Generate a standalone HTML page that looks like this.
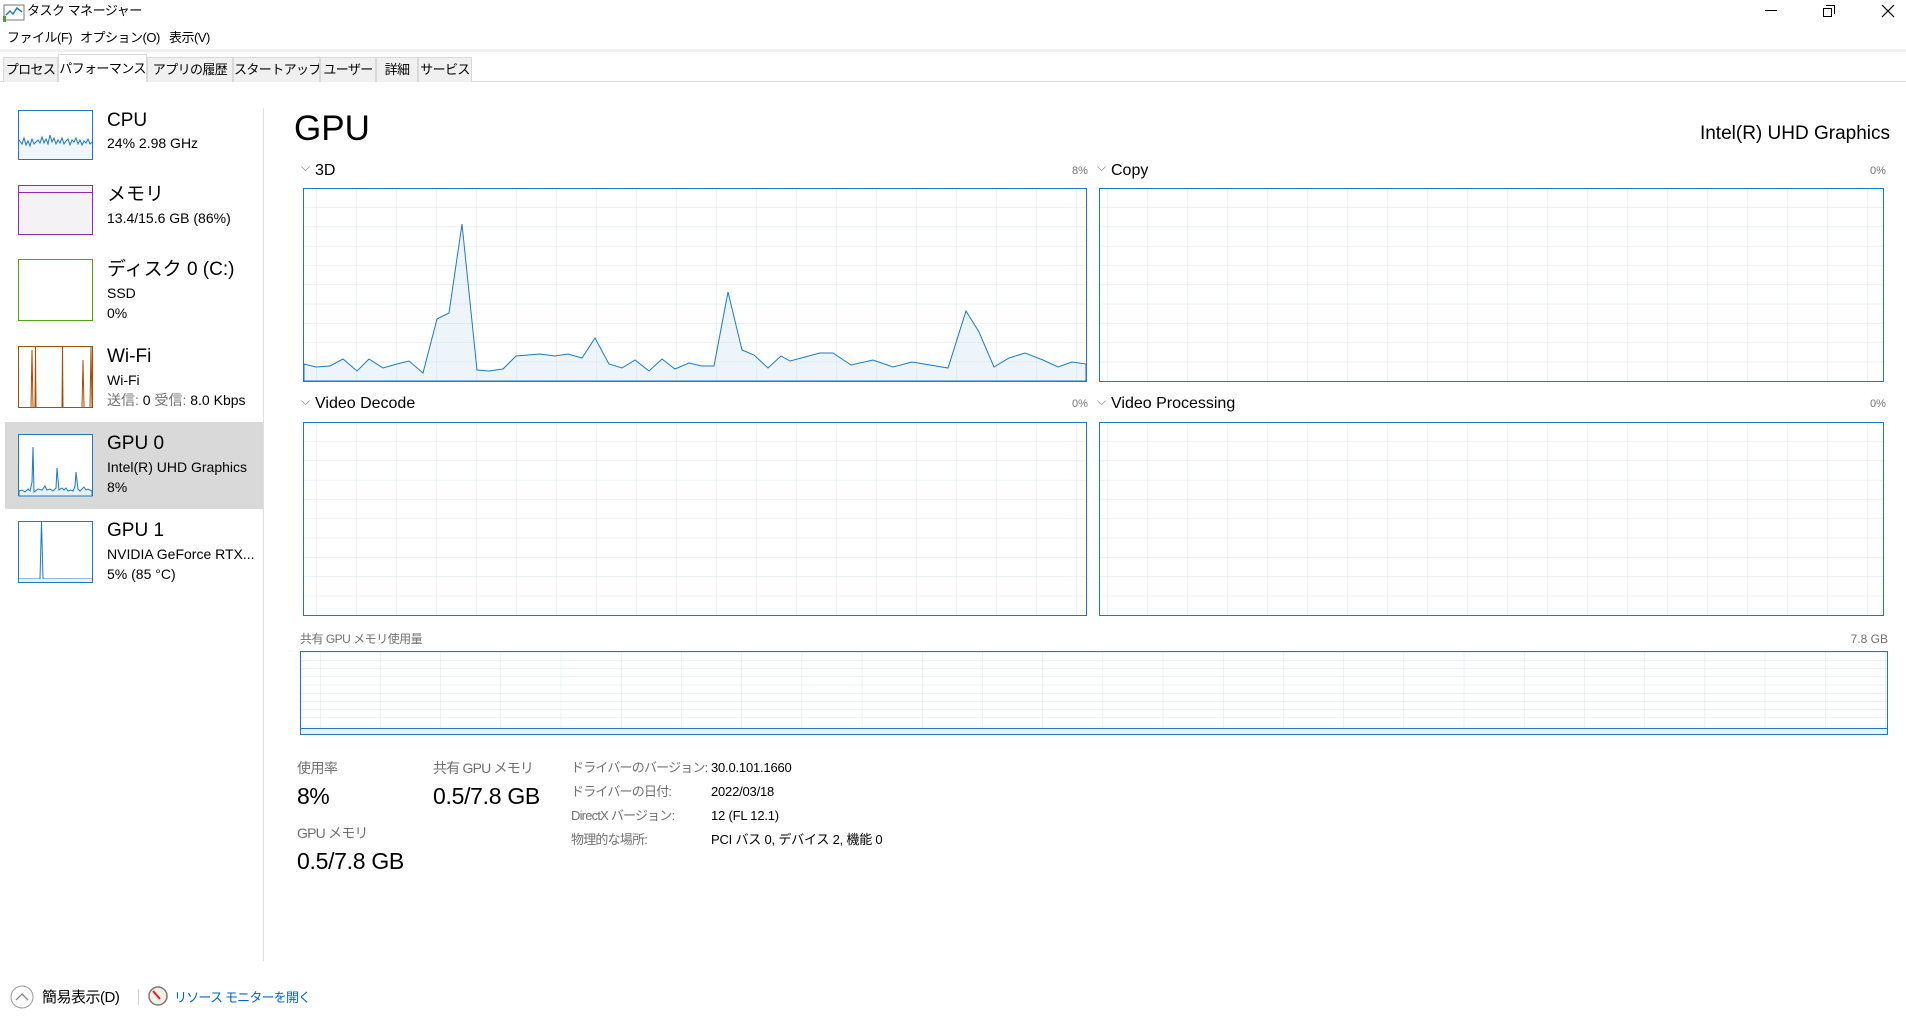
<!DOCTYPE html>
<html><head><meta charset="utf-8">
<style>
*{margin:0;padding:0;box-sizing:border-box}
body{width:1906px;height:1019px;background:#fff;position:relative;overflow:hidden;font-family:"Liberation Sans","Noto Sans CJK JP",sans-serif;color:#000}
.t{position:absolute;white-space:nowrap;line-height:1}
.g{color:#707070}
.tab{position:absolute;top:57px;height:25px;background:#f0f0f0;border:1px solid #d9d9d9;border-bottom:none;font-size:13px;letter-spacing:-0.6px;line-height:23px;text-align:center;white-space:nowrap;overflow:hidden}
.m{font-size:13px;letter-spacing:-0.5px}
.d{font-size:13px;letter-spacing:-0.8px}
.v{font-size:13px;letter-spacing:-0.2px}
svg{position:absolute;left:0;top:0}
</style></head><body>
<!-- title bar -->
<svg width="24" height="20" style="left:3px;top:3px"><rect x="1" y="2" width="20" height="15" fill="#fff" stroke="#777"/><polyline points="3,12 7,8 10,11 14,5 19,9" fill="none" stroke="#2a7ab8" stroke-width="1.5"/><rect x="0" y="13" width="3" height="6" fill="#5a9a3a"/></svg>
<div class="t m" style="left:27px;top:4px">タスク マネージャー</div>
<div style="position:absolute;left:1765px;top:10px;width:12px;height:1px;background:#000"></div>
<div style="position:absolute;left:1823px;top:8px;width:9px;height:9px;border:1px solid #000"></div>
<div style="position:absolute;left:1826px;top:5px;width:9px;height:9px;border-top:1px solid #000;border-right:1px solid #000"></div>
<svg width="1906" height="20" style="top:0"><path d="M1882 5 L1894 17 M1894 5 L1882 17" stroke="#000" stroke-width="1.2"/></svg>
<!-- menu -->
<div class="t m" style="left:7px;top:31px">ファイル(F)</div>
<div class="t m" style="left:80px;top:31px">オプション(O)</div>
<div class="t m" style="left:169px;top:31px">表示(V)</div>
<div style="position:absolute;left:0;top:49px;width:1906px;height:3px;background:#f0f0f0"></div>
<!-- tabs -->
<div style="position:absolute;left:0;top:81px;width:1906px;height:1px;background:#d9d9d9"></div>
<div class="tab" style="left:3px;width:55px">プロセス</div>
<div class="tab" style="left:58px;width:89px;top:54px;height:28px;background:#fff;line-height:27px">パフォーマンス</div>
<div class="tab" style="left:147px;width:86px">アプリの履歴</div>
<div class="tab" style="left:233px;width:87px">スタートアップ</div>
<div class="tab" style="left:320px;width:56px">ユーザー</div>
<div class="tab" style="left:376px;width:42px">詳細</div>
<div class="tab" style="left:418px;width:54px">サービス</div>
<!-- sidebar -->
<div style="position:absolute;left:263px;top:108px;width:1px;height:853px;background:#e0e0e0"></div>
<div style="position:absolute;left:5px;top:422px;width:258px;height:87px;background:#d9d9d9"></div>
<svg width="280" height="600" style="top:100px">
 <rect x="18.5" y="10.5" width="74" height="49" fill="#f1f6fa" stroke="#1c7ac2"/>
 <rect x="19" y="11" width="73" height="28" fill="#fff"/>
 <polyline points="19,40 22,44 24,38 26,45 28,41 30,46 32,39 34,44 36,42 38,40 40,43 42,37 44,43 46,39 48,44 50,35 52,42 54,38 56,44 58,40 60,43 62,38 64,44 66,41 68,39 70,45 72,40 74,42 76,38 78,44 80,40 82,45 84,41 86,43 88,39 90,44 92,42" fill="none" stroke="#1c7ac2" stroke-width="1"/>
 <rect x="18.5" y="85.5" width="74" height="49" fill="#f4f2f4" stroke="#9528b4"/>
 <line x1="19" y1="92.5" x2="92" y2="92.5" stroke="#9528b4"/>
 <rect x="18.5" y="159.5" width="74" height="61" fill="#fff" stroke="#4da60c"/>
 <rect x="18.5" y="246.5" width="74" height="61" fill="#fff" stroke="#a74f01"/>
 <path d="M31 307 L32 250 L33 307 M35 307 L35.5 246 L36 307 M62 307 L62.5 246 L63 307 M82 307 L83 260 L84 307 M90 307 L91 246 L92 307" stroke="#a74f01" fill="none"/>
</svg>
<svg width="280" height="200" style="top:420px">
 <rect x="18.5" y="14.5" width="74" height="61" fill="#fff" stroke="#1c7ac2"/>
 <polygon points="19,76 19,71 22,70 25,72 28,69 30,71 32,62 33,27 34,72 38,69 42,70 45,66 47,70 50,69 53,71 56,68 57,48 59,70 62,68 64,70 66,68 68,71 71,70 73,71 75,66 76,52 78,69 80,71 84,67 86,70 88,69 92,71 92,76" fill="#e9f1f8" stroke="#1c7ac2" stroke-width="1"/>
 <rect x="18.5" y="101.5" width="74" height="61" fill="#fff" stroke="#1c7ac2"/>
 <polyline points="19,159 40,159 41.5,102 43,159 92,159" fill="none" stroke="#1c7ac2"/>
 <rect x="19" y="159" width="73" height="3" fill="#e9f1f8"/>
</svg>
<div class="t" style="left:107px;top:111px;font-size:19px">CPU</div>
<div class="t" style="left:107px;top:136px;font-size:14px">24% 2.98 GHz</div>
<div class="t" style="left:107px;top:185px;font-size:19px">メモリ</div>
<div class="t" style="left:107px;top:211px;font-size:14px">13.4/15.6 GB (86%)</div>
<div class="t" style="left:107px;top:260px;font-size:19px">ディスク 0 (C:)</div>
<div class="t" style="left:107px;top:286px;font-size:14px">SSD</div>
<div class="t" style="left:107px;top:306px;font-size:14px">0%</div>
<div class="t" style="left:107px;top:347px;font-size:19px">Wi-Fi</div>
<div class="t" style="left:107px;top:373px;font-size:14px">Wi-Fi</div>
<div class="t" style="left:107px;top:393px;font-size:14px"><span class="g">送信:</span> 0 <span class="g">受信:</span> 8.0 Kbps</div>
<div class="t" style="left:107px;top:434px;font-size:19px">GPU 0</div>
<div class="t" style="left:107px;top:460px;font-size:14px">Intel(R) UHD Graphics</div>
<div class="t" style="left:107px;top:480px;font-size:14px">8%</div>
<div class="t" style="left:107px;top:521px;font-size:19px">GPU 1</div>
<div class="t" style="left:107px;top:547px;font-size:14px">NVIDIA GeForce RTX...</div>
<div class="t" style="left:107px;top:567px;font-size:14px">5% (85 °C)</div>
<!-- main header -->
<div class="t" style="left:294px;top:111px;font-size:35px">GPU</div>
<div class="t" style="right:16px;top:124px;font-size:19px">Intel(R) UHD Graphics</div>
<!-- graph labels -->
<div class="t g" style="left:301px;top:161px;font-size:12px">⌵</div>
<div class="t" style="left:315px;top:163px;font-size:16px">3D</div>
<div class="t g" style="left:1072px;top:166px;font-size:11px">8%</div>
<div class="t g" style="left:1097px;top:161px;font-size:12px">⌵</div>
<div class="t" style="left:1111px;top:163px;font-size:16px">Copy</div>
<div class="t g" style="left:1870px;top:166px;font-size:11px">0%</div>
<div class="t g" style="left:301px;top:395px;font-size:12px">⌵</div>
<div class="t" style="left:315px;top:396px;font-size:16px">Video Decode</div>
<div class="t g" style="left:1072px;top:399px;font-size:11px">0%</div>
<div class="t g" style="left:1097px;top:395px;font-size:12px">⌵</div>
<div class="t" style="left:1111px;top:396px;font-size:16px">Video Processing</div>
<div class="t g" style="left:1870px;top:399px;font-size:11px">0%</div>
<div class="t g" style="left:300px;top:633px;font-size:12px;letter-spacing:-0.5px">共有 GPU メモリ使用量</div>
<div class="t g" style="right:18px;top:633px;font-size:12px">7.8 GB</div>
<svg width="1906" height="760">
 <defs>
  <pattern id="p1" x="316" y="188" width="40" height="19.3" patternUnits="userSpaceOnUse"><path d="M0 0 V19.3 M0 0 H40" stroke="#d4e5f2" fill="none"/></pattern>
  <pattern id="p2" x="1107" y="188" width="40" height="19.3" patternUnits="userSpaceOnUse"><path d="M0 0 V19.3 M0 0 H40" stroke="#d4e5f2" fill="none"/></pattern>
  <pattern id="p3" x="1107" y="422" width="40" height="19.3" patternUnits="userSpaceOnUse"><path d="M0 0 V19.3 M0 0 H40" stroke="#d4e5f2" fill="none"/></pattern>
  <pattern id="p4" x="316" y="422" width="40" height="19.3" patternUnits="userSpaceOnUse"><path d="M0 0 V19.3 M0 0 H40" stroke="#d4e5f2" fill="none"/></pattern>
  <pattern id="p5" x="320" y="652" width="60.2" height="8.2" patternUnits="userSpaceOnUse"><path d="M0 0 V8.2 M0 0 H60.2" stroke="#d4e5f2" fill="none"/></pattern>
 </defs>
 <rect x="303.5" y="188.5" width="783" height="193" fill="url(#p1)"/>
 <polygon points="304,364 316,367 330,366 343,359 357,371 369,359 383,368 397,364 409,361 423,373 437,319 449,313 462,224 477,370 489,371 503,369 516,356 540,354 555,356 568,354 582,358 595,338 609,364 622,368 635,360 649,371 662,359 675,369 689,363 702,366 714,366 728,292 742,350 754,355 768,368 781,356 790,361 805,357 820,353 833,353 851,365 873,360 893,367 912,362 930,365 948,368 966,311 979,332 994,367 1009,358 1025,353 1043,360 1058,367 1072,362 1086,364 1086,381 304,381" fill="rgba(200,222,240,0.3)" stroke="#1c7ac2" stroke-width="1"/>
 <rect x="303.5" y="188.5" width="783" height="193" fill="none" stroke="#1c7ac2"/>
 <rect x="1099.5" y="188.5" width="784" height="193" fill="url(#p2)" stroke="#1c7ac2"/>
 <rect x="303.5" y="422.5" width="783" height="193" fill="url(#p4)" stroke="#1c7ac2"/>
 <rect x="1099.5" y="422.5" width="784" height="193" fill="url(#p3)" stroke="#1c7ac2"/>
 <rect x="300.5" y="651.5" width="1587" height="83" fill="url(#p5)"/>
 <rect x="301" y="728" width="1586" height="6" fill="#eef2f5"/>
 <line x1="301" y1="728.5" x2="1887" y2="728.5" stroke="#1c7ac2"/>
 <rect x="300.5" y="651.5" width="1587" height="83" fill="none" stroke="#1c7ac2"/>
</svg>
<!-- stats -->
<div class="t g" style="left:297px;top:761px;font-size:14px;letter-spacing:-0.5px">使用率</div>
<div class="t" style="left:297px;top:785px;font-size:23px;letter-spacing:-0.5px">8%</div>
<div class="t g" style="left:433px;top:761px;font-size:14px;letter-spacing:-0.8px">共有 GPU メモリ</div>
<div class="t" style="left:433px;top:785px;font-size:23px;letter-spacing:-0.3px">0.5/7.8 GB</div>
<div class="t g" style="left:297px;top:826px;font-size:14px;letter-spacing:-0.8px">GPU メモリ</div>
<div class="t" style="left:297px;top:850px;font-size:23px;letter-spacing:-0.3px">0.5/7.8 GB</div>
<div class="t g d" style="left:571px;top:761px">ドライバーのバージョン:</div>
<div class="t g d" style="left:571px;top:785px">ドライバーの日付:</div>
<div class="t g d" style="left:571px;top:809px">DirectX バージョン:</div>
<div class="t g d" style="left:571px;top:833px">物理的な場所:</div>
<div class="t v" style="left:711px;top:761px">30.0.101.1660</div>
<div class="t v" style="left:711px;top:785px">2022/03/18</div>
<div class="t v" style="left:711px;top:809px">12 (FL 12.1)</div>
<div class="t v" style="left:711px;top:833px">PCI バス 0, デバイス 2, 機能 0</div>
<!-- bottom -->
<svg width="320" height="40" style="top:980px">
 <circle cx="22" cy="17" r="11" fill="none" stroke="#999"/>
 <polyline points="16,20 22,14 28,20" fill="none" stroke="#888" stroke-width="1.3"/>
 <line x1="138.5" y1="9" x2="138.5" y2="25" stroke="#ccc"/>
 <circle cx="158" cy="16" r="9" fill="#f3eee6" stroke="#777" stroke-width="1.5"/>
 <line x1="153" y1="11" x2="160" y2="19" stroke="#d22" stroke-width="2"/>
</svg>
<div class="t" style="left:42px;top:990px;font-size:15px;letter-spacing:-0.5px">簡易表示(D)</div>
<div class="t" style="left:174px;top:991px;font-size:13px;letter-spacing:-0.8px;color:#0066cc">リソース モニターを開く</div>
</body></html>
